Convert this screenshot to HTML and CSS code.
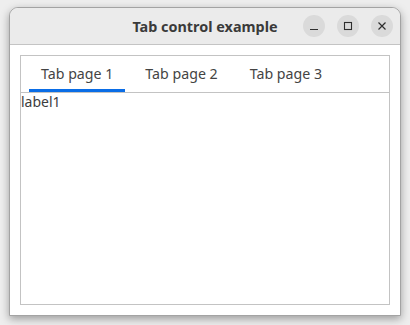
FILE: index.html
```html
<!DOCTYPE html>
<html>
<head>
<meta charset="utf-8">
<link rel="stylesheet" href="styles.css">
</head>
<body>
<div class="window">
  <div class="titlebar">
    <div class="title">Tab control example</div>
    <div class="controls">
      <button class="ctl" aria-label="Minimize">
        <svg width="10" height="10" viewBox="0 0 10 10"><path d="M1 8.5H9" stroke="#2e2e2e" stroke-width="1.2"/></svg>
      </button>
      <button class="ctl" aria-label="Maximize">
        <svg width="10" height="10" viewBox="0 0 10 10"><rect x="1.5" y="1.5" width="7" height="7" fill="none" stroke="#2e2e2e" stroke-width="1.1"/></svg>
      </button>
      <button class="ctl" aria-label="Close">
        <svg width="10" height="10" viewBox="0 0 10 10"><path d="M1.5 1.5L8.5 8.5M8.5 1.5L1.5 8.5" stroke="#2e2e2e" stroke-width="1.2"/></svg>
      </button>
    </div>
  </div>
  <div class="content">
    <div class="tabcontrol">
      <div class="tabs">
        <div class="tab active">Tab page 1</div>
        <div class="tab">Tab page 2</div>
        <div class="tab">Tab page 3</div>
      </div>
      <div class="page">
        <span class="label">label1</span>
      </div>
    </div>
  </div>
</div>
</body>
</html>
```

FILE: styles.css
```css
html, body {
  margin: 0;
  padding: 0;
  width: 410px;
  height: 325px;
  overflow: hidden;
  background: #eeeeee;
  font-family: "Noto Sans", "Open Sans", sans-serif;
}

.window {
  box-sizing: border-box;
  margin: 7px 0 0 9px;
  width: 392px;
  height: 309px;
  border: 1px solid #a3a3a3;
  border-radius: 9px 9px 0 0;
  background: #ffffff;
  box-shadow: 0 3px 9px rgba(0, 0, 0, 0.35);
  display: flex;
  flex-direction: column;
  overflow: hidden;
}

.titlebar {
  position: relative;
  height: 37px;
  flex: none;
  box-sizing: border-box;
  background: #ebebeb;
  border-bottom: 1px solid #c4c4c4;
  border-radius: 8px 8px 0 0;
  display: flex;
  align-items: center;
  justify-content: center;
}

.title {
  font-weight: bold;
  font-size: 14.4px;
  color: #3a3a3a;
  margin-top: 1px;
}

.controls {
  position: absolute;
  right: 7px;
  top: 7px;
  display: flex;
  gap: 12px;
}

.ctl {
  width: 22px;
  height: 22px;
  border-radius: 50%;
  border: none;
  padding: 0;
  background: #dadada;
  display: flex;
  align-items: center;
  justify-content: center;
}

.content {
  flex: 1;
  padding: 10px;
  display: flex;
}

.tabcontrol {
  flex: 1;
  border: 1px solid #c3c3c3;
  display: flex;
  flex-direction: column;
}

.tabs {
  height: 36px;
  border-bottom: 1px solid #c3c3c3;
  display: flex;
  gap: 8px;
  padding-left: 8px;
}

.tab {
  padding: 1px 12px 0;
  font-size: 14.2px;
  color: #444444;
  display: flex;
  align-items: center;
  box-sizing: border-box;
  border-bottom: 3px solid transparent;
}

.tab.active {
  border-bottom-color: #0a6de6;
}

.page {
  flex: 1;
  font-size: 14px;
  color: #3d3d3d;
  line-height: 16px;
  padding-top: 1px;
}
```
